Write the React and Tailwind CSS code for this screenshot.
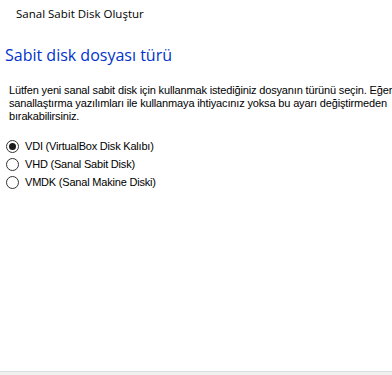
import React, { useState } from 'react';

const options = [
  { id: 'vdi', label: 'VDI (VirtualBox Disk Kalıbı)' },
  { id: 'vhd', label: 'VHD (Sanal Sabit Disk)' },
  { id: 'vmdk', label: 'VMDK (Sanal Makine Diski)' },
];

const Radio = ({ checked }) => (
  <span className="flex h-[13px] w-[13px] shrink-0 items-center justify-center rounded-full border border-[#333333] bg-white">
    {checked && <span className="h-[7px] w-[7px] rounded-full bg-[#1a1a1a]" />}
  </span>
);

export default function App() {
  const [selected, setSelected] = useState('vdi');

  return (
    <div className="flex h-[375px] w-[392px] flex-col overflow-hidden bg-white font-['Liberation_Sans',sans-serif] text-black">
      {/* Title */}
      <div className="pl-[16px] pt-[6px] text-[11.5px] leading-[16px] font-['Open_Sans',sans-serif]">
        Sanal Sabit Disk Oluştur
      </div>

      {/* Page heading */}
      <h1 className="mt-[23px] pl-[5px] text-[16px] leading-[20px] text-[#0033cc] font-['Open_Sans',sans-serif]">
        Sabit disk dosyası türü
      </h1>

      {/* Description */}
      <p className="mt-[19px] whitespace-nowrap pl-[9px] text-[11px] leading-[13px] tracking-[-0.15px]">
        Lütfen yeni sanal sabit disk için kullanmak istediğiniz dosyanın türünü seçin. Eğer
        <br />
        sanallaştırma yazılımları ile kullanmaya ihtiyacınız yoksa bu ayarı değiştirmeden
        <br />
        bırakabilirsiniz.
      </p>

      {/* Options */}
      <div className="mt-[16px] flex flex-col gap-[4px] pl-[6px]">
        {options.map((opt) => (
          <label
            key={opt.id}
            onClick={() => setSelected(opt.id)}
            className="flex h-[14px] cursor-pointer items-center gap-[6px] text-[11px] tracking-[-0.2px]"
          >
            <Radio checked={selected === opt.id} />
            <span>{opt.label}</span>
          </label>
        ))}
      </div>

      <div className="flex-1" />

      {/* Bottom button strip */}
      <div className="h-[4px] border-t border-[#dcdcdc] bg-[#f0f0f0]" />
    </div>
  );
}
